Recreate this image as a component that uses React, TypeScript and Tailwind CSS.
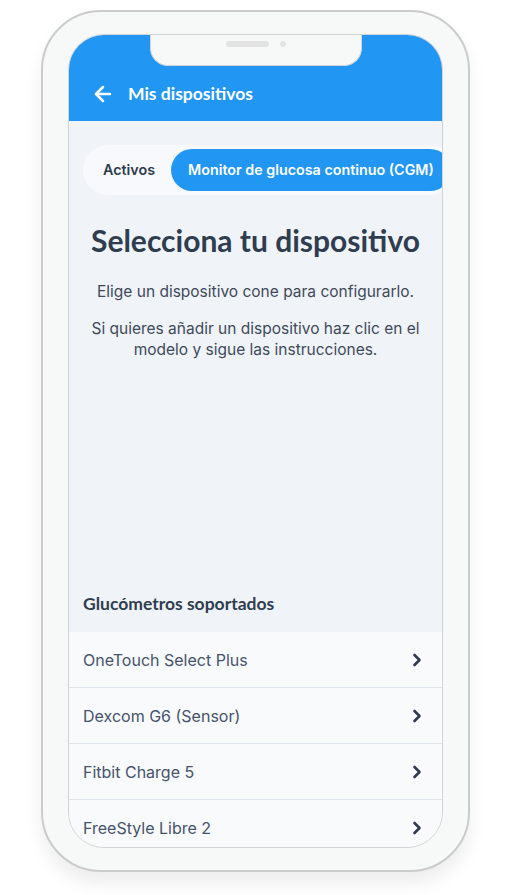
import React from "react";

const heading = { fontFamily: "Lato, 'Noto Sans', sans-serif" };
const body = { fontFamily: "Inter, 'Noto Sans', sans-serif" };

function Chevron() {
  return (
    <svg width="10" height="14" viewBox="0 0 10 14" fill="none" className="shrink-0">
      <path d="M2.5 2 L7.5 7 L2.5 12" stroke="#2d3b4e" strokeWidth="2.6" strokeLinecap="round" strokeLinejoin="round" />
    </svg>
  );
}

const devices = ["OneTouch Select Plus", "Dexcom G6 (Sensor)", "Fitbit Charge 5", "FreeStyle Libre 2"];

export default function App() {
  return (
    <div className="min-h-[895px] w-[511px] bg-white pt-[10px] pl-[41px]">
      <div className="w-[429px] h-[862px] rounded-[60px] border-2 border-[#cbcbcb] bg-[#f7f8f8] pt-[22px] pl-[25px] shadow-[0_12px_18px_rgba(0,0,0,0.07)]">
        <div className="relative w-[375px] h-[814px] rounded-[36px] border border-[#d3d3d3] overflow-hidden bg-[#f0f3f8] flex flex-col">
          {/* notch */}
          <div className="absolute left-[81px] top-[-1px] w-[212px] h-[32px] bg-[#f7f8f8] border border-t-0 border-[#d6d6d6] rounded-b-[18px] z-10 flex items-center justify-center gap-[11px] pb-[12px]">
            <div className="w-[43px] h-[6px] rounded-full bg-[#e3e3e3]" />
            <div className="w-[6px] h-[6px] rounded-full bg-[#e3e3e3]" />
          </div>
          {/* header */}
          <div className="h-[86px] shrink-0 bg-[#2196f3] pt-[40px]">
            <div className="h-[38px] flex items-center pl-[22px] gap-[13px]">
              <svg width="24" height="24" viewBox="0 0 24 24" fill="none" stroke="white" strokeWidth="2.5" strokeLinecap="round" strokeLinejoin="round">
                <path d="M19 12H5" />
                <path d="M12 19l-7-7 7-7" />
              </svg>
              <span className="text-white font-bold text-[17.5px]" style={heading}>Mis dispositivos</span>
            </div>
          </div>
          {/* tabs */}
          <div className="pl-[14px] pt-[24px]">
            <div className="w-max h-[50px] rounded-full bg-[#f8f9fc] flex items-center pl-[20px] pr-[4px]">
              <span className="text-[14.3px] font-semibold text-[#2d3b4e] mr-[16px]" style={body}>Activos</span>
              <div className="h-[42px] rounded-full bg-[#2196f3] flex items-center px-[17px]">
                <span className="text-[14.3px] font-semibold text-white" style={body}>Monitor de glucosa continuo (CGM)</span>
              </div>
            </div>
          </div>
          {/* heading */}
          <h1 className="mt-[27px] text-center text-[30px] font-bold text-[#2f3d50] leading-[36px]" style={heading}>Selecciona tu dispositivo</h1>
          <div className="mt-[23px] px-[14px] text-center text-[15.5px] leading-[21px] text-[#3e4a5a]" style={body}>
            <p>Elige un dispositivo cone para configurarlo.</p>
            <p className="mt-[16px]">Si quieres añadir un dispositivo haz clic en el modelo y sigue las instrucciones.</p>
          </div>
          <div className="flex-1" />
          <div className="px-[14px] pb-[15px] text-[17.5px] font-bold text-[#2f3d50]" style={heading}>Glucómetros soportados</div>
          <div className="flex flex-col bg-[#f8fafc] h-[215px] shrink-0">
            {devices.map((d, i) => (
              <div key={d} className={`h-[56px] shrink-0 flex items-center justify-between pl-[14px] pr-[20px] ${i < devices.length - 1 ? "border-b border-[#dde4ee]" : ""}`}>
                <span className="text-[16px] text-[#46536a]" style={body}>{d}</span>
                <Chevron />
              </div>
            ))}
          </div>
        </div>
      </div>
    </div>
  );
}
